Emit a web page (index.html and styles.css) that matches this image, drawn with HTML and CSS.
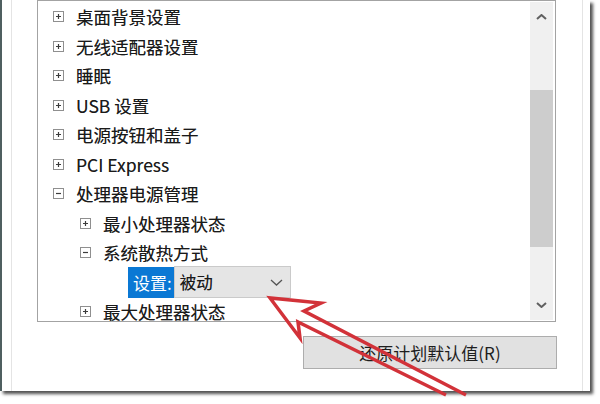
FILE: index.html
```html
<!DOCTYPE html>
<html lang="zh-CN">
<head>
<meta charset="utf-8">
<link rel="stylesheet" href="styles.css">
</head>
<body>
<div class="window">
  <div class="panel">
    <div class="listbox">
      <div class="tree">
        <div class="row l1"><span class="exp"><svg viewBox="0 0 11 11"><rect x="0.5" y="0.5" width="10" height="10" class="box"/><path d="M3 5.5h5M5.5 3v5" class="sign"/></svg></span><span class="label">桌面背景设置</span></div>
        <div class="row l1"><span class="exp"><svg viewBox="0 0 11 11"><rect x="0.5" y="0.5" width="10" height="10" class="box"/><path d="M3 5.5h5M5.5 3v5" class="sign"/></svg></span><span class="label">无线适配器设置</span></div>
        <div class="row l1"><span class="exp"><svg viewBox="0 0 11 11"><rect x="0.5" y="0.5" width="10" height="10" class="box"/><path d="M3 5.5h5M5.5 3v5" class="sign"/></svg></span><span class="label">睡眠</span></div>
        <div class="row l1"><span class="exp"><svg viewBox="0 0 11 11"><rect x="0.5" y="0.5" width="10" height="10" class="box"/><path d="M3 5.5h5M5.5 3v5" class="sign"/></svg></span><span class="label">USB 设置</span></div>
        <div class="row l1"><span class="exp"><svg viewBox="0 0 11 11"><rect x="0.5" y="0.5" width="10" height="10" class="box"/><path d="M3 5.5h5M5.5 3v5" class="sign"/></svg></span><span class="label">电源按钮和盖子</span></div>
        <div class="row l1"><span class="exp"><svg viewBox="0 0 11 11"><rect x="0.5" y="0.5" width="10" height="10" class="box"/><path d="M3 5.5h5M5.5 3v5" class="sign"/></svg></span><span class="label">PCI Express</span></div>
        <div class="row l1"><span class="exp"><svg viewBox="0 0 11 11"><rect x="0.5" y="0.5" width="10" height="10" class="box"/><path d="M3 5.5h5" class="sign"/></svg></span><span class="label">处理器电源管理</span></div>
        <div class="row l2"><span class="exp"><svg viewBox="0 0 11 11"><rect x="0.5" y="0.5" width="10" height="10" class="box"/><path d="M3 5.5h5M5.5 3v5" class="sign"/></svg></span><span class="label">最小处理器状态</span></div>
        <div class="row l2"><span class="exp"><svg viewBox="0 0 11 11"><rect x="0.5" y="0.5" width="10" height="10" class="box"/><path d="M3 5.5h5" class="sign"/></svg></span><span class="label">系统散热方式</span></div>
        <div class="row l3"><span class="setlabel">设置:</span><div class="select"><span class="sel-text">被动</span><svg class="sel-chev" viewBox="0 0 13 7"><polyline points="1,1 6.5,6 12,1"/></svg></div></div>
        <div class="row l2"><span class="exp"><svg viewBox="0 0 11 11"><rect x="0.5" y="0.5" width="10" height="10" class="box"/><path d="M3 5.5h5M5.5 3v5" class="sign"/></svg></span><span class="label">最大处理器状态</span></div>
      </div>
      <div class="scrollbar">
        <div class="sb-btn"><svg viewBox="0 0 11 6"><polyline points="1,5 5.5,1 10,5"/></svg></div>
        <div class="sb-track"><div class="sb-thumb"></div></div>
        <div class="sb-btn"><svg viewBox="0 0 11 6"><polyline points="1,1 5.5,5 10,1"/></svg></div>
      </div>
    </div>
    <div class="actions"><button class="btn">还原计划默认值(R)</button></div>
  </div>
</div>
<svg class="arrow" viewBox="0 0 600 404"><polyline points="466,395 304,311 321,303 270,298 300,338 298,322 446,395"/></svg>
</body>
</html>
```

FILE: styles.css
```css
html, body {
  margin: 0;
  padding: 0;
}
body {
  width: 600px;
  height: 404px;
  background: #ffffff;
  position: relative;
  overflow: hidden;
  font-family: "Noto Sans CJK SC", "Noto Sans", sans-serif;
  color: #1a1a1a;
}
.window {
  width: 590px;
  height: 391px;
  box-sizing: border-box;
  border-left: 2px solid #4f5f60;
  padding-left: 9px;
  background: #fff;
  box-shadow: 3px 3px 3px rgba(50, 50, 50, 0.85);
  display: flex;
}
.panel {
  width: 572px;
  height: 100%;
  box-sizing: border-box;
  border-left: 1px solid #e4e4e4;
  border-right: 1px solid #e4e4e4;
  padding: 0 25px;
  display: flex;
  flex-direction: column;
  align-items: flex-start;
}
.listbox {
  width: 519px;
  height: 322px;
  box-sizing: border-box;
  border: 1px solid #a3a3a3;
  display: flex;
  background: #fff;
}
.tree {
  flex: 1;
  overflow: hidden;
  padding-top: 1px;
}
.row {
  height: 29.5px;
  display: flex;
  align-items: center;
  font-size: 17.5px;
  white-space: nowrap;
  text-shadow: 0 0 0.4px rgba(0, 0, 0, 0.5);
}
.row.l1 { padding-left: 15px; }
.row.l2 { padding-left: 42px; }
.row.l3 { padding-left: 90px; }
.exp {
  width: 11px;
  height: 11px;
  display: flex;
  margin-right: 12px;
}
.exp svg { width: 11px; height: 11px; }
.exp .box { fill: #fff; stroke: #8f8f8f; stroke-width: 1; }
.exp .sign { stroke: #3c3c3c; stroke-width: 1.2; fill: none; }
.label { line-height: 1; }
.setlabel {
  background: #0a78d4;
  color: #fff;
  height: 31px;
  display: flex;
  align-items: center;
  padding: 0 2px 0 5px;
  font-size: 17px;
  text-shadow: none;
}
.select {
  width: 117px;
  height: 32px;
  box-sizing: border-box;
  background: #e5e5e5;
  border: 1px solid #cacaca;
  display: flex;
  align-items: center;
  justify-content: space-between;
  padding: 0 7px 0 5px;
  font-size: 16.5px;
}
.sel-chev { width: 13px; height: 7px; }
.sel-chev polyline { fill: none; stroke: #555; stroke-width: 1.3; }
.scrollbar {
  width: 23px;
  margin: 1px 2px 0 0;
  height: 318px;
  background: #f0f0f0;
  display: flex;
  flex-direction: column;
}
.sb-btn {
  height: 30px;
  display: flex;
  align-items: center;
  justify-content: center;
}
.sb-btn svg { width: 11px; height: 6px; }
.sb-btn polyline { fill: none; stroke: #606060; stroke-width: 2; }
.sb-track { flex: 1; }
.sb-thumb {
  margin-top: 58px;
  height: 157px;
  background: #cdcdcd;
}
.actions {
  align-self: stretch;
  display: flex;
  justify-content: flex-end;
  margin-top: 14px;
}
.btn {
  width: 254px;
  height: 33px;
  background: #e1e1e1;
  border: 1px solid #adadad;
  font-family: "Noto Sans CJK SC", "Noto Sans", sans-serif;
  font-size: 17px;
  color: #1e1e1e;
  padding: 0;
  margin: 0;
}
.arrow {
  position: absolute;
  left: 0;
  top: 0;
  width: 600px;
  height: 404px;
  pointer-events: none;
}
.arrow polyline {
  fill: none;
  stroke: #d23239;
  stroke-width: 3.5;
  stroke-linejoin: miter;
}
```
